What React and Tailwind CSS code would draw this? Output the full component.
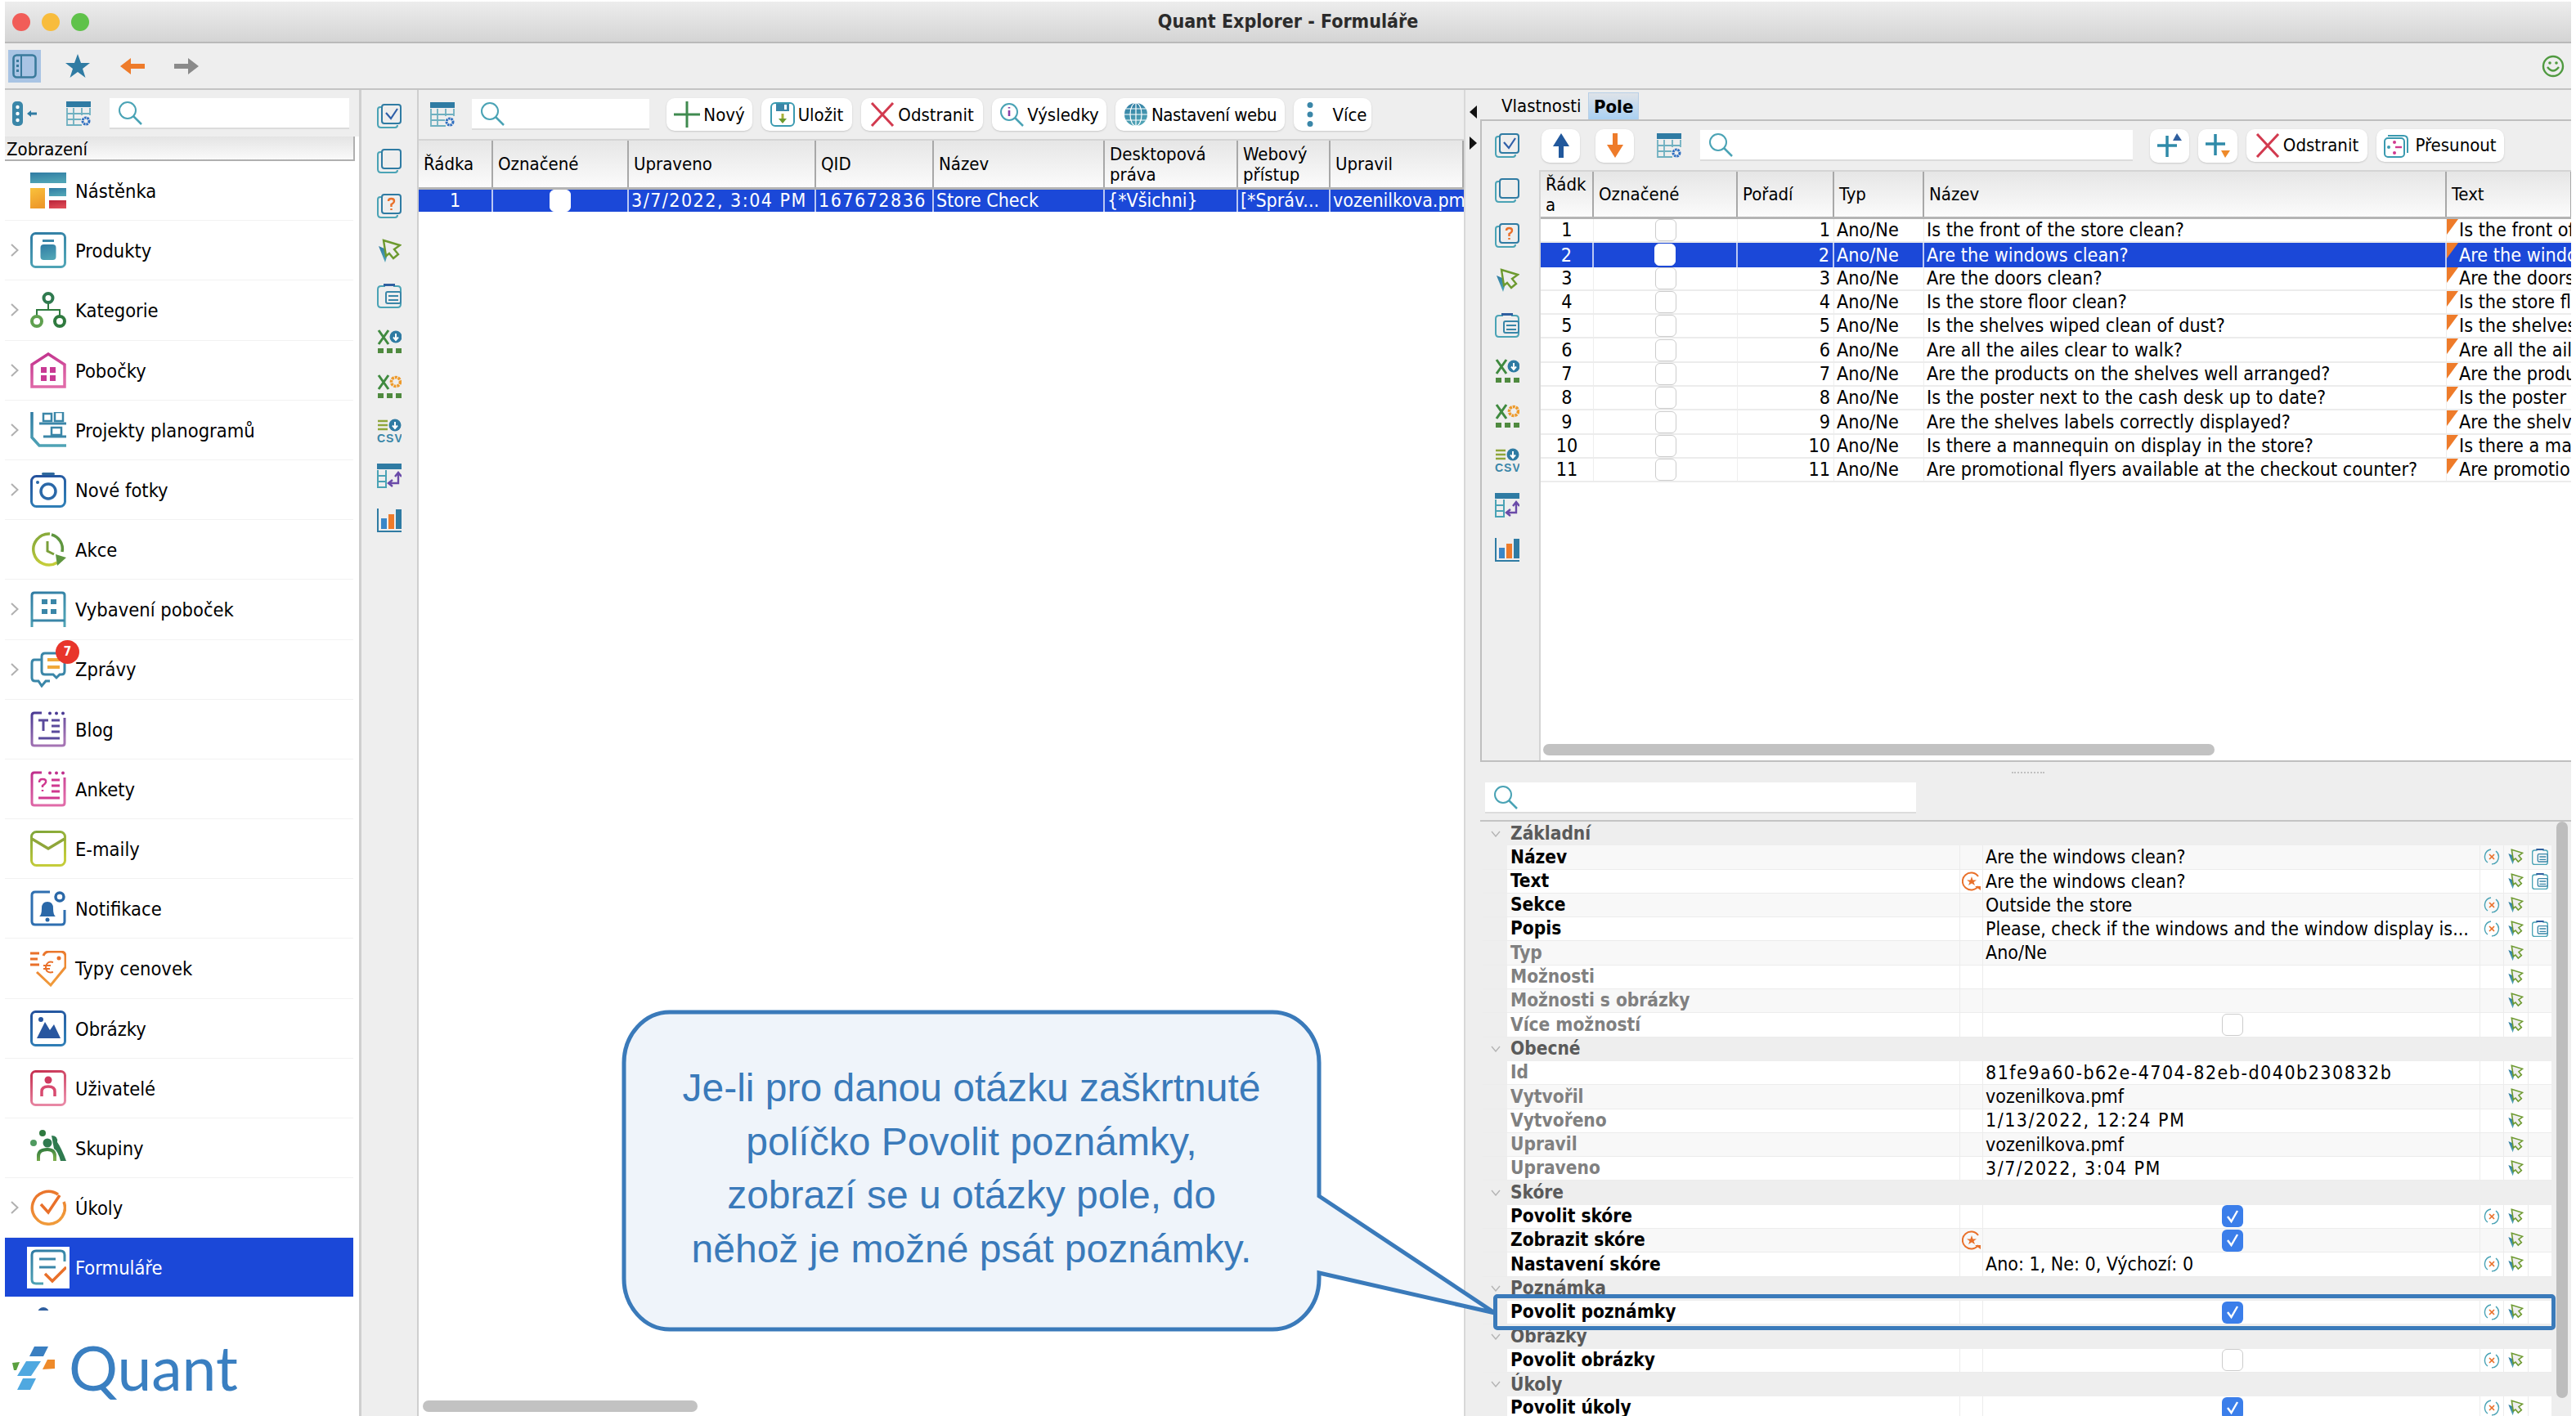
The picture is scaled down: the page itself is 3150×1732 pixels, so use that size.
import React from 'react';

const TEAL = '#3a86a8';
const BLUE = '#2f6fb0';
const SEL = 'bg-[#1b48d8] text-white';

function Gradients() {
  const defs = {
    teal: ['#2f7ba3', '#4fa3b5'],
    orange: ['#f9c23c', '#ee9a2a'],
    red: ['#b9243a', '#dd4a55'],
    pink: ['#c02f8c', '#e06aa8'],
    green: ['#2f7a3f', '#7aac4a'],
    lime: ['#7fa53a', '#c4cc3a'],
    blue: ['#24509c', '#2f7db5'],
    purple: ['#4a3a94', '#a574b4'],
    rose: ['#c62f4f', '#e887a4'],
    tag: ['#e9702a', '#f09a3a'],
  };
  return (
    <svg className="absolute h-0 w-0">
      <defs>
        {Object.entries(defs).map(([k, [a, b]]) => (
          <linearGradient key={k} id={`g-${k}`} x1="0" y1="0" x2="0.3" y2="1">
            <stop offset="0" stopColor={a} />
            <stop offset="1" stopColor={b} />
          </linearGradient>
        ))}
      </defs>
    </svg>
  );
}

const Svg = ({ s = 44, v = 44, children }) => (
  <svg width={s} height={s} viewBox={`0 0 ${v} ${v}`} fill="none" className="shrink-0">{children}</svg>
);

// sidebar icons
const sideIcons = {
  dash: (
    <Svg>
      <rect x="0" y="0" width="44" height="13" fill="url(#g-teal)" />
      <rect x="0" y="19" width="18" height="25" fill="url(#g-orange)" />
      <rect x="23" y="19" width="21" height="10" fill="url(#g-teal)" />
      <rect x="23" y="34" width="21" height="10" fill="url(#g-red)" />
    </Svg>
  ),
  product: (
    <Svg>
      <rect x="1.5" y="1.5" width="41" height="41" rx="5" stroke="url(#g-teal)" strokeWidth="3" />
      <rect x="15" y="9" width="14" height="3" fill={TEAL} />
      <rect x="12.5" y="15" width="19" height="19" rx="4" fill="url(#g-teal)" />
    </Svg>
  ),
  category: (
    <Svg>
      <path d="M22 13V22M8 29V22H36V29" stroke="#2f7a3f" strokeWidth="2" />
      <circle cx="22" cy="7.5" r="5.5" stroke="#2f7a4f" strokeWidth="4" />
      <circle cx="8" cy="36" r="6" stroke="#5fa04f" strokeWidth="4" />
      <circle cx="36" cy="36" r="6" stroke="#2f7a3f" strokeWidth="4" />
    </Svg>
  ),
  branch: (
    <Svg>
      <path d="M2 42V15L22 2L42 15V42Z" stroke="url(#g-pink)" strokeWidth="3.5" />
      <path d="M13 18h7v7h-7zM24 18h7v7h-7zM13 28h7v7h-7zM24 28h7v7h-7z" fill="#c93a94" />
    </Svg>
  ),
  plano: (
    <Svg>
      <path d="M2 0V31L11 41H44" stroke="url(#g-teal)" strokeWidth="3.5" />
      <path d="M11 14H44" stroke={TEAL} strokeWidth="3" />
      <path d="M16 30H44" stroke={TEAL} strokeWidth="3" />
      <path d="M16 2h10v9H16zM30 0h10v11H30zM26 19h12v9H26z" stroke={TEAL} strokeWidth="2.5" />
    </Svg>
  ),
  photo: (
    <Svg>
      <rect x="1.5" y="5.5" width="41" height="37" rx="6" stroke="url(#g-blue)" strokeWidth="3" />
      <rect x="14" y="1" width="16" height="3" rx="1.5" fill="#2f6a9c" />
      <circle cx="22" cy="24" r="9" stroke="#2a68a8" strokeWidth="3.5" />
      <circle cx="9" cy="13" r="2" fill="#2a68a8" />
    </Svg>
  ),
  action: (
    <Svg>
      <path d="M24 3A19 19 0 1 0 33 38" stroke="url(#g-lime)" strokeWidth="3.5" />
      <path d="M26 4A18 18 0 0 1 39 25" stroke="#5f963f" strokeWidth="3.5" />
      <path d="M21 12V24L29 28" stroke="#7a9f3a" strokeWidth="3" />
      <path d="M31 28L44 32L33 42Z" fill="#5f963f" />
    </Svg>
  ),
  equip: (
    <Svg>
      <path d="M2 44V5Q2 2 5 2H39Q42 2 42 5V44" stroke="url(#g-teal)" strokeWidth="3" />
      <path d="M2 36H42" stroke={TEAL} strokeWidth="3" />
      <path d="M14 10h7v6h-7zM25 10h7v6h-7zM14 22h7v6h-7zM25 22h7v6h-7z" fill={TEAL} />
    </Svg>
  ),
  msg: (
    <Svg>
      <path d="M14 10H5Q2 10 2 14V32Q2 36 6 36H10L14 42L19 36H24" stroke={TEAL} strokeWidth="3" />
      <path d="M18 2H38Q42 2 42 6V24Q42 28 38 28H36L32 32L28 28H18Q14 28 14 24V6Q14 2 18 2Z" fill="#fff" stroke={TEAL} strokeWidth="3" />
      <path d="M21 10H36M21 19H36" stroke="#f0a93a" strokeWidth="4" />
    </Svg>
  ),
  blog: (
    <Svg>
      <path d="M14 2H5Q2 2 2 5V39Q2 42 5 42H39Q42 42 42 39V8" stroke="url(#g-purple)" strokeWidth="3" />
      <circle cx="24" cy="2.5" r="2" fill="#4a3a94" /><circle cx="32" cy="2.5" r="2" fill="#4a3a94" /><circle cx="40" cy="2.5" r="2" fill="#4a3a94" />
      <path d="M10 11H22M16 11V24" stroke="#5a4a9c" strokeWidth="3" />
      <path d="M26 11H36M26 18H36M26 25H36M10 33H36" stroke="#5a4a9c" strokeWidth="3" />
    </Svg>
  ),
  poll: (
    <Svg>
      <path d="M14 2H5Q2 2 2 5V39Q2 42 5 42H39Q42 42 42 39V8" stroke="url(#g-pink)" strokeWidth="3" />
      <circle cx="24" cy="2.5" r="2" fill="#c02f8c" /><circle cx="32" cy="2.5" r="2" fill="#c02f8c" /><circle cx="40" cy="2.5" r="2" fill="#c02f8c" />
      <path d="M11 14Q11 10 15 10Q20 10 19 14Q18 16 15 18V20M15 23V25" stroke="#d0388f" strokeWidth="2.5" />
      <path d="M26 11H36M26 18H36M26 25H36M10 33H36" stroke="#d0388f" strokeWidth="3" />
    </Svg>
  ),
  mail: (
    <Svg>
      <rect x="1.5" y="1.5" width="41" height="41" rx="6" stroke="url(#g-lime)" strokeWidth="3" />
      <path d="M2 10L22 22L42 10" stroke="#8fa63a" strokeWidth="3.5" />
    </Svg>
  ),
  notif: (
    <Svg>
      <path d="M24 2H6Q2 2 2 6V38Q2 42 6 42H38Q42 42 42 38V24" stroke={BLUE} strokeWidth="3" />
      <path d="M11 32Q14 30 14 22Q14 14 21 14Q28 14 28 22Q28 30 31 32Z" fill="#2a68a8" />
      <circle cx="21" cy="36" r="2.5" fill="#2a68a8" />
      <circle cx="36" cy="8" r="5" stroke="#2a68a8" strokeWidth="3.5" />
    </Svg>
  ),
  price: (
    <Svg>
      <path d="M0 3H11M0 10H9M0 17H11" stroke="#e9702a" strokeWidth="3" />
      <path d="M16 6Q18 1 23 1H37Q43 1 43 7V20L25 42L8 26" stroke="url(#g-tag)" strokeWidth="3" />
      <circle cx="35" cy="9" r="2.5" fill="#e9702a" />
      <path d="M28 14Q20 12 19 20Q19 28 28 26M16 18H25M16 22H24" stroke="#e9702a" strokeWidth="2" />
    </Svg>
  ),
  image: (
    <Svg>
      <rect x="1.5" y="1.5" width="41" height="41" rx="5" stroke="url(#g-blue)" strokeWidth="3" />
      <path d="M8 34L18 14L24 24L29 17L37 34Z" fill="#28569f" />
      <circle cx="13" cy="11" r="3" fill="#28569f" />
    </Svg>
  ),
  user: (
    <Svg>
      <rect x="1.5" y="1.5" width="41" height="41" rx="5" stroke="url(#g-rose)" strokeWidth="3" />
      <circle cx="22" cy="12" r="4.5" fill="#cf3a5f" />
      <path d="M14 32V26Q14 20 22 20Q30 20 30 26V32" stroke="#d84a6f" strokeWidth="3.5" />
    </Svg>
  ),
  group: (
    <Svg>
      <circle cx="15" cy="4" r="4" fill="#2f7a3f" />
      <circle cx="4" cy="16" r="4" fill="#4f9a5f" />
      <circle cx="21" cy="16" r="5.5" fill="#2f7a4f" />
      <path d="M26 7Q34 7 33 15Q38 22 44 38H37Q34 26 29 23" fill="#2f7a4f" />
      <path d="M10 38V32Q10 24 21 24Q30 24 30 32V38" stroke="url(#g-green)" strokeWidth="4" />
    </Svg>
  ),
  task: (
    <Svg>
      <path d="M34 6A20 20 0 1 0 41 15" stroke="url(#g-tag)" strokeWidth="3.5" />
      <path d="M13 18L22 28L36 7" stroke="#e9702a" strokeWidth="3.5" />
    </Svg>
  ),
  form: (
    <Svg>
      <path d="M42 15V7Q42 2 37 2H7Q2 2 2 7V37Q2 42 7 42H16" stroke="url(#g-teal)" strokeWidth="3" />
      <path d="M11 12H31M11 22H31" stroke={TEAL} strokeWidth="3" />
      <path d="M18 30L27 39L44 22" stroke="#e9702a" strokeWidth="3.5" />
    </Svg>
  ),
};

const navItems = [
  ['Nástěnka', 'dash', false],
  ['Produkty', 'product', true],
  ['Kategorie', 'category', true],
  ['Pobočky', 'branch', true],
  ['Projekty planogramů', 'plano', true],
  ['Nové fotky', 'photo', true],
  ['Akce', 'action', false],
  ['Vybavení poboček', 'equip', true],
  ['Zprávy', 'msg', true],
  ['Blog', 'blog', false],
  ['Ankety', 'poll', false],
  ['E-maily', 'mail', false],
  ['Notifikace', 'notif', false],
  ['Typy cenovek', 'price', false],
  ['Obrázky', 'image', false],
  ['Uživatelé', 'user', false],
  ['Skupiny', 'group', false],
  ['Úkoly', 'task', true],
];

// strip and toolbar icons, 30 units
const CopyFrame = ({ children }) => (
  <Svg s={30} v={30}>
    <path d="M5 4H4Q1 4 1 7V25Q1 29 5 29H22Q25 29 25 26" stroke="#4aa3b5" strokeWidth="2" />
    <rect x="6" y="1" width="23" height="23" rx="3" fill="#eee" stroke="#2f7ba3" strokeWidth="2" />
    {children}
  </Svg>
);

const CursorIcon = ({ s = 30 }) => (
  <Svg s={s} v={30}>
    <path d="M2 9L18 16L13 19L10 29Z" fill="url(#g-teal)" />
    <path d="M8 2L28 8L21 13L26 19L20 24L15 18L11 21Z" fill="#eee" stroke="#6d9a2f" strokeWidth="2.4" />
  </Svg>
);

const DocIcon = ({ s = 30 }) => (
  <Svg s={s} v={30}>
    <path d="M10 3H5Q1 3 1 7V25Q1 29 5 29H25Q29 29 29 25V7Q29 3 25 3H20" stroke="#4aa3b5" strokeWidth="2" />
    <rect x="8" y="0" width="14" height="3" fill="#2f5f9f" />
    <rect x="11" y="10" width="18" height="14" rx="2" stroke="#3a86a8" strokeWidth="2" />
    <path d="M14 15H26M14 20H26" stroke="#3a86a8" strokeWidth="2" />
  </Svg>
);

const Squares = () => (
  <path d="M1 24h7v6H1zM12 24h7v6h-7zM23 24h7v6h-7z" fill="#4f8a3f" />
);

const stripIcons = [
  <CopyFrame key="0"><path d="M11 11L17 18L25 6" stroke="#2f5fa8" strokeWidth="2.2" /></CopyFrame>,
  <CopyFrame key="1" />,
  <CopyFrame key="2">
    <path d="M14 9Q14 6 17.500 6Q21 6 21 9Q21 11 17.500 13V16M17.500 18V20" stroke="#e9702a" strokeWidth="2.4" />
  </CopyFrame>,
  <CursorIcon key="3" />,
  <DocIcon key="4" />,
  <Svg key="5" s={30} v={30}>
    <path d="M2 2L14 19M14 2L2 19" stroke="#3f8a3f" strokeWidth="3" />
    <circle cx="23" cy="10" r="7.5" fill="#2f7ba3" />
    <path d="M23 6V13M20 10.5L23 14L26 10.5" stroke="#fff" strokeWidth="2" />
    <Squares />
  </Svg>,
  <Svg key="6" s={30} v={30}>
    <path d="M2 2L14 19M14 2L2 19" stroke="#3f8a3f" strokeWidth="3" />
    <circle cx="23" cy="10" r="5.5" stroke="#ee9a2a" strokeWidth="3.6" strokeDasharray="3 1" />
    <Squares />
  </Svg>,
  <Svg key="7" s={30} v={30}>
    <path d="M1 3H13M1 8H13M1 13H13" stroke="#8fa63a" strokeWidth="2.6" />
    <circle cx="22" cy="8" r="7.5" fill="#2f7ba3" />
    <path d="M22 4V11M19 8.5L22 12L25 8.5" stroke="#fff" strokeWidth="2" />
    <text x="0" y="29" fontSize="14" fontWeight="700" letterSpacing="1" fill="#3a86a8" fontFamily="Liberation Sans, sans-serif">CSV</text>
  </Svg>,
  <Svg key="8" s={30} v={30}>
    <rect x="0" y="0" width="30" height="7" fill="#2f7ba3" />
    <path d="M1 8V29H11V8M1 15H11M1 22H11" stroke="#4aa3b5" strokeWidth="2" />
    <path d="M15 24H26V13M22 16L26 11L30 16M19 20L14 24L19 28" stroke="#6a4aa8" strokeWidth="2.4" />
  </Svg>,
  <Svg key="9" s={30} v={30}>
    <path d="M1 0V28H30" stroke="#2f7ba3" strokeWidth="2" />
    <rect x="5" y="12" width="7" height="13" fill="#3a86c8" />
    <rect x="14" y="7" width="7" height="18" fill="#ee7b2a" />
    <rect x="23" y="1" width="7" height="24" fill="#2f7ba3" />
  </Svg>,
];

const SearchIcon = () => (
  <Svg s={30} v={30}>
    <circle cx="12" cy="12" r="10" stroke="#4aa3b5" strokeWidth="2" />
    <path d="M19 19L29 29" stroke="#4aa3b5" strokeWidth="2.5" />
  </Svg>
);

const GridIcon = () => (
  <Svg s={30} v={30}>
    <rect x="0" y="0" width="30" height="7" fill="#2f7ba3" />
    <path d="M1 8V29H19M29 8V17M1 15H29M1 22H18M9 8V29M19 8V17" stroke="#6fb0c0" strokeWidth="1.8" />
    <circle cx="24" cy="24" r="4" stroke="#2f6fc0" strokeWidth="3" strokeDasharray="2.5 0.8" />
  </Svg>
);

const SearchBox = ({ w }) => (
  <div className={`flex h-[38px] items-center bg-white border-b-2 border-[#dcdcdc] pl-[10px] ${w}`}>
    <SearchIcon />
  </div>
);

const PlusIcon = () => (
  <Svg s={32} v={32}>
    <path d="M0 16H32" stroke="#3f8a4f" strokeWidth="3" />
    <path d="M16 0V32" stroke="#3f8a4f" strokeWidth="3" />
  </Svg>
);

const XIcon = () => (
  <Svg s={30} v={30}>
    <path d="M2 1L28 29M28 1L2 29" stroke="#d23a4f" strokeWidth="3" />
  </Svg>
);

const SaveIcon = () => (
  <Svg s={30} v={30}>
    <rect x="1" y="1" width="28" height="28" rx="5" stroke="#3a9ab0" strokeWidth="2" />
    <path d="M7 2H23V11H7Z" fill="#3a86a8" />
    <rect x="17" y="3" width="3" height="6" fill="#fff" />
    <path d="M15 14V23" stroke="#a8b03a" strokeWidth="3" />
    <path d="M10 20L15 26L20 20Z" fill="#6d9a2f" />
  </Svg>
);

const ResultIcon = () => (
  <Svg s={30} v={30}>
    <circle cx="12" cy="12" r="10" stroke="#4aa3b5" strokeWidth="2" />
    <path d="M19 19L29 29" stroke="#4aa3b5" strokeWidth="2.5" />
    <path d="M12 6V7.5M12 10V17" stroke="#8a3fa8" strokeWidth="2.6" />
  </Svg>
);

const GlobeIcon = () => (
  <Svg s={30} v={30}>
    <circle cx="15" cy="15" r="14" fill="url(#g-teal)" />
    <path d="M15 1V29M1 15H29M3 8H27M3 22H27" stroke="#fff" strokeWidth="1.2" />
    <ellipse cx="15" cy="15" rx="7" ry="14" stroke="#fff" strokeWidth="1.2" />
  </Svg>
);

const DotsIcon = () => (
  <Svg s={30} v={30}>
    <circle cx="15" cy="3.5" r="3.5" fill="#3a86a8" />
    <circle cx="15" cy="15" r="3.5" fill="#3a86a8" />
    <circle cx="15" cy="26.5" r="3.5" fill="#3a86a8" />
  </Svg>
);

const MoveIcon = () => (
  <Svg s={30} v={30}>
    <path d="M5 3H24Q29 3 29 8V24" stroke="#3a9ab0" strokeWidth="2" />
    <rect x="1" y="6" width="24" height="23" rx="4" stroke="#3a9ab0" strokeWidth="2" fill="#fff" />
    <circle cx="13" cy="11" r="2" fill="#d0388f" /><circle cx="13" cy="24" r="2" fill="#d0388f" />
    <circle cx="6" cy="17" r="2" fill="#3a9ab0" />
    <path d="M14 17H22" stroke="#d0388f" strokeWidth="2.4" />
  </Svg>
);

const Btn = ({ icon, label, w, gap = 'gap-[4px]', cls = '' }) => (
  <div className={`flex h-[40px] shrink-0 items-center justify-center rounded-[10px] bg-white text-[22px] text-black shadow-[0_1px_2px_#c8c8c8] ${gap} ${w} ${cls}`}>
    {icon}
    {label && <span>{label}</span>}
  </div>
);

const Check = ({ on = false, sel = false }) =>
  on ? (
    <div className="flex h-[27px] w-[26px] items-center justify-center rounded-[6px] bg-[#3b7eea]">
      <svg width="18" height="18" viewBox="0 0 18 18" fill="none">
        <path d="M3 9L7.5 15L15 2" stroke="#fff" strokeWidth="2.4" />
      </svg>
    </div>
  ) : (
    <div className={`h-[27px] w-[26px] rounded-[6px] border bg-white ${sel ? 'border-white' : 'border-[#cccccc]'}`} />
  );

const leftCols = [
  { w: 'w-[91px]', h: 'Řádka' },
  { w: 'w-[166px]', h: 'Označené' },
  { w: 'w-[229px]', h: 'Upraveno' },
  { w: 'w-[144px]', h: 'QID' },
  { w: 'w-[209px]', h: 'Název' },
  { w: 'w-[163px]', h: <>Desktopová<br />práva</> },
  { w: 'w-[113px]', h: <>Webový<br />přístup</> },
  { w: 'w-[163px]', h: 'Upravil' },
];

const rightCols = [
  { w: 'w-[65px]', h: <>Řádk<br />a</> },
  { w: 'w-[176px]', h: 'Označené' },
  { w: 'w-[118px]', h: 'Pořadí' },
  { w: 'w-[110px]', h: 'Typ' },
  { w: 'w-[639px]', h: 'Název' },
  { w: 'w-[153px]', h: 'Text' },
];

const HeaderRow = ({ cols, h }) => (
  <div className={`flex shrink-0 border-b-[3px] border-[#b4b4b4] bg-gradient-to-b from-[#e6e6e6] to-[#fbfbfb] text-[22px] leading-[25px] text-black ${h}`}>
    {cols.map((c, i) => (
      <div key={i} className={`flex shrink-0 items-center border-r-2 border-[#a8a8a8] pl-[6px] ${c.w}`}>
        <span>{c.h}</span>
      </div>
    ))}
  </div>
);

const questions = [
  'Is the front of the store clean?',
  'Are the windows clean?',
  'Are the doors clean?',
  'Is the store floor clean?',
  'Is the shelves wiped clean of dust?',
  'Are all the ailes clear to walk?',
  'Are the products on the shelves well arranged?',
  'Is the poster next to the cash desk up to date?',
  'Are the shelves labels correctly displayed?',
  'Is there a mannequin on display in the store?',
  'Are promotional flyers available at the checkout counter?',
];

const StarRefresh = () => (
  <Svg s={24} v={24}>
    <path d="M20 6A10.5 10.5 0 1 0 20 18" stroke="#e9702a" strokeWidth="2" />
    <path d="M16 18H23V23Z" fill="#e9702a" />
    <path d="M12 6L13.5 10.5H18L14.5 13L16 17L12 14.5L8 17L9.5 13L6 10.5H10.5Z" fill="#e9702a" />
  </Svg>
);

const ResetIcon = () => (
  <Svg s={20} v={20}>
    <path d="M9 1A9 9 0 0 0 5 17" stroke="#4aa3b5" strokeWidth="1.4" />
    <path d="M10 19A9 9 0 0 0 15 3" stroke="#4aa3b5" strokeWidth="1.4" />
    <path d="M7 7L13 13M13 7L7 13" stroke="#e9702a" strokeWidth="1.6" />
  </Svg>
);

const propRows = [
  { g: 'Základní' },
  { n: 'Název', v: 'Are the windows clean?', i: [1, 1, 1] },
  { n: 'Text', v: 'Are the windows clean?', star: true, i: [0, 1, 1] },
  { n: 'Sekce', v: 'Outside the store', i: [1, 1, 0] },
  { n: 'Popis', v: 'Please, check if the windows and the window display is...', i: [1, 1, 1] },
  { n: 'Typ', v: 'Ano/Ne', dim: true, i: [0, 1, 0] },
  { n: 'Možnosti', v: '', dim: true, i: [0, 1, 0] },
  { n: 'Možnosti s obrázky', v: '', dim: true, i: [0, 1, 0] },
  { n: 'Více možností', c: 'off', dim: true, i: [0, 1, 0] },
  { g: 'Obecné' },
  { n: 'Id', v: '81fe9a60-b62e-4704-82eb-d040b230832b', num: true, dim: true, i: [0, 1, 0] },
  { n: 'Vytvořil', v: 'vozenilkova.pmf', dim: true, i: [0, 1, 0] },
  { n: 'Vytvořeno', v: '1/13/2022, 12:24 PM', num: true, dim: true, i: [0, 1, 0] },
  { n: 'Upravil', v: 'vozenilkova.pmf', dim: true, i: [0, 1, 0] },
  { n: 'Upraveno', v: '3/7/2022, 3:04 PM', num: true, dim: true, i: [0, 1, 0] },
  { g: 'Skóre' },
  { n: 'Povolit skóre', c: 'on', i: [1, 1, 0] },
  { n: 'Zobrazit skóre', c: 'on', star: true, i: [0, 1, 0] },
  { n: 'Nastavení skóre', v: 'Ano: 1, Ne: 0, Výchozí: 0', i: [1, 1, 0] },
  { g: 'Poznámka' },
  { n: 'Povolit poznámky', c: 'on', i: [1, 1, 0] },
  { g: 'Obrázky' },
  { n: 'Povolit obrázky', c: 'off', i: [1, 1, 0] },
  { g: 'Úkoly' },
  { n: 'Povolit úkoly', c: 'on', i: [1, 1, 0] },
];

function PropRow({ row, odd }) {
  if (row.g) {
    return (
      <div className="flex h-[29.3px] shrink-0 items-center bg-[#eeeeee]">
        <div className="flex w-[30px] justify-center pl-[2px]">
          <svg width="12" height="8" viewBox="0 0 12 8" fill="none"><path d="M1 1L6 7L11 1" stroke="#b4b4b4" strokeWidth="1.4" /></svg>
        </div>
        <span className="pl-[4px] text-[22.500px] font-bold text-[#5a5a5a]">{row.g}</span>
      </div>
    );
  }
  return (
    <div className={`flex h-[29.3px] shrink-0 border-b border-[#ececec] ${odd ? 'bg-[#f8f8f8]' : 'bg-white'}`}>
      <div className="w-[30px] shrink-0 bg-[#eeeeee]" />
      <div className={`flex w-[553px] shrink-0 items-center pl-[4px] text-[22.500px] font-bold ${row.dim ? 'text-[#808080]' : 'text-black'}`}>
        {row.n}
      </div>
      <div className="flex w-[29px] shrink-0 items-center justify-center border-x border-[#ececec]">
        {row.star && <StarRefresh />}
      </div>
      <div className={`flex w-[607px] shrink-0 items-center pl-[3px] text-[23px] whitespace-nowrap text-black ${row.num ? 'tracking-[1.5px]' : ''}`}>
        {row.c ? <div className="flex w-full justify-center"><Check on={row.c === 'on'} /></div> : row.v}
      </div>
      {row.i.map((on, k) => (
        <div key={k} className="flex w-[29.3px] shrink-0 items-center justify-center border-l border-[#ececec]">
          {on ? (k === 0 ? <ResetIcon /> : k === 1 ? <CursorIcon s={20} /> : <DocIcon s={20} />) : null}
        </div>
      ))}
    </div>
  );
}

const ArrowUp = () => (
  <svg width="20" height="30" viewBox="0 0 20 30"><path d="M10 0L20 16H13V30H7V16H0Z" fill="#21589c" /></svg>
);
const ArrowDown = () => (
  <svg width="20" height="30" viewBox="0 0 20 30"><path d="M7 0H13V14H20L10 30L0 14H7Z" fill="#ee7b2a" /></svg>
);

export default function App() {
  return (
    <div className="relative flex h-[1732px] w-[3150px] flex-col overflow-hidden bg-white pt-[2px] pr-[6px] pl-[6px] font-['DejaVu_Sans',sans-serif] font-stretch-condensed">
      <Gradients />

      {/* title */}
      <div className="grid h-[51px] shrink-0 grid-cols-[1fr_auto_1fr] items-center border-b-2 border-[#b9b9b9] bg-gradient-to-b from-[#ededed] to-[#d4d4d4]">
        <div className="flex gap-[14px] pl-[9px]">
          <div className="h-[22px] w-[22px] rounded-full bg-[#f15d58]" />
          <div className="h-[22px] w-[22px] rounded-full bg-[#f8bc3c]" />
          <div className="h-[22px] w-[22px] rounded-full bg-[#5fc24a]" />
        </div>
        <div className="text-[23px] font-bold text-[#2b2b2b]">Quant Explorer - Formuláře</div>
        <div />
      </div>

      {/* toolbar */}
      <div className="flex h-[55px] shrink-0 items-center bg-[#eeeeee] pr-[8px] pl-[4px]">
        <div className="flex h-[40px] w-[40px] items-center justify-center bg-[#a9c4e4]">
          <svg width="30" height="30" viewBox="0 0 30 30" fill="none">
            <rect x="1.5" y="1.5" width="27" height="27" rx="4" stroke="#3a7a9c" strokeWidth="2.6" />
            <path d="M11 2V28" stroke="#3a7a9c" strokeWidth="2" />
            <rect x="5" y="7" width="3" height="3" fill="#3a7a9c" /><rect x="5" y="13" width="3" height="3" fill="#3a7a9c" /><rect x="5" y="19" width="3" height="3" fill="#3a7a9c" />
          </svg>
        </div>
        <svg className="ml-[30px]" width="30" height="30" viewBox="0 0 30 30"><path d="M15 0L19 11H30L21 18L24.500 29L15 22L5.500 29L9 18L0 11H11Z" fill="#2f7ba3" /></svg>
        <svg className="ml-[37px]" width="30" height="20" viewBox="0 0 30 20"><path d="M0 10L13 0V7H30V13H13V20Z" fill="#ee7b2a" /></svg>
        <svg className="ml-[36px]" width="30" height="20" viewBox="0 0 30 20"><path d="M30 10L17 0V7H0V13H17V20Z" fill="#8a8a8a" /></svg>
        <svg className="ml-auto" width="28" height="28" viewBox="0 0 28 28" fill="none">
          <circle cx="14" cy="14" r="12" stroke="#4f9a3f" strokeWidth="2.4" />
          <path d="M7 15Q14 24 21 15" stroke="#4f9a3f" strokeWidth="2.4" />
          <circle cx="10" cy="10" r="1.8" fill="#4f9a3f" /><circle cx="18" cy="10" r="1.8" fill="#4f9a3f" />
        </svg>
      </div>

      <div className="flex min-h-0 flex-1 border-t-2 border-[#c4c4c4]">
        {/* sidebar */}
        <div className="flex h-full w-[436px] shrink-0 flex-col border-r-[3px] border-[#cfcfcf] bg-white">
          <div className="flex h-[57px] shrink-0 items-center bg-[#eeeeee] pl-[9px]">
            <svg width="30" height="30" viewBox="0 0 30 30" fill="none">
              <rect x="0" y="0" width="13" height="30" rx="5" fill="#3a86a8" />
              <circle cx="6.500" cy="7" r="2.200" fill="#fff" /><circle cx="6.500" cy="15" r="2.200" fill="#fff" /><circle cx="6.500" cy="23" r="2.200" fill="#fff" />
              <path d="M18 15L23 11V13.500H30V16.500H23V19Z" fill="#2f7ba3" />
            </svg>
            <div className="ml-[36px]"><GridIcon /></div>
            <div className="ml-[23px]"><SearchBox w="w-[293px]" /></div>
          </div>
          <div className="flex h-[30px] w-[428px] shrink-0 items-center border-r-2 border-b-2 border-[#b0b0b0] bg-gradient-to-b from-[#e4e4e4] to-[#fafafa] pt-[2px] pl-[2px] text-[22px] text-black">
            Zobrazení
          </div>
          <div className="h-[1406px] w-[426px] shrink-0 overflow-hidden text-[23.500px] text-black">
            {navItems.map(([label, icon, chev]) => (
              <div key={label} className="flex h-[73.2px] items-center border-b border-[#f2f2f2]">
                <div className="flex w-[31px] shrink-0 pl-[7px]">
                  {chev && (
                    <svg width="10" height="16" viewBox="0 0 10 16" fill="none"><path d="M1 1L8.500 8L1 15" stroke="#b0b0b0" strokeWidth="2" /></svg>
                  )}
                </div>
                <div className="relative">
                  {sideIcons[icon]}
                  {label === 'Zprávy' && (
                    <div className="absolute top-[-14px] left-[31px] flex h-[29px] w-[29px] items-center justify-center rounded-full bg-[#e8352b] text-[15px] font-bold text-white">7</div>
                  )}
                </div>
                <span className="ml-[11px] pt-[3px]">{label}</span>
              </div>
            ))}
            <div className={`flex h-[72px] items-center ${SEL}`}>
              <div className="ml-[27px] flex h-[51px] w-[52px] shrink-0 items-center justify-center bg-white">
                {sideIcons.form}
              </div>
              <span className="ml-[7px] pt-[3px]">Formuláře</span>
            </div>
            <div className="pt-[13px] pl-[31px]">
              <div className="ml-[9px] h-[8px] w-[14px] rounded-t-full bg-[#2f5f9f]" />
            </div>
          </div>
          <div className="flex flex-1 items-start pt-[40px] pl-[9px]">
            <svg width="52" height="54" viewBox="0 0 52 54" className="mt-[3px] shrink-0">
              <path d="M27 1H44L38 13H21Z" fill="#3a7fc1" />
              <path d="M17 19H35L23 37H6Z M13 40H29L22 54H6Z" fill="#4fa8e0" />
              <path d="M9 20L0 21L2 30L5 30Z" fill="#5aa03f" />
              <path d="M43 17H52V28L37 29Z" fill="#ee8a2a" />
            </svg>
            <div className="ml-[17px] font-['Lato',sans-serif] text-[75px] leading-[58px] font-normal text-[#3a7fc1] font-stretch-normal">Quant</div>
          </div>
        </div>

        {/* forms list */}
        <div className="flex h-full w-[68px] shrink-0 flex-col items-center gap-[25px] bg-[#eeeeee] pt-[17px]">
          {stripIcons.map((ic, i) => <div key={i}>{ic}</div>)}
        </div>
        <div className="flex h-full w-[1280px] shrink-0 flex-col border-l-2 border-[#cfcfcf] bg-[#eeeeee]">
          <div className="flex h-[60px] shrink-0 items-center pl-[14px]">
            <GridIcon />
            <div className="ml-[21px]"><SearchBox w="w-[217px]" /></div>
            <div className="ml-[21px] flex gap-[11px]">
              <Btn w="w-[105px]" icon={<PlusIcon />} label="Nový" />
              <Btn w="w-[111px]" icon={<SaveIcon />} label="Uložit" />
              <Btn w="w-[149px]" icon={<XIcon />} label="Odstranit" />
              <Btn w="w-[140px]" icon={<ResultIcon />} label="Výsledky" />
              <Btn w="w-[207px]" cls="tracking-[-0.4px]" icon={<GlobeIcon />} label="Nastavení webu" />
              <Btn w="w-[95px]" gap="gap-[12px]" icon={<DotsIcon />} label="Více" />
            </div>
          </div>
          <div className="flex min-h-0 flex-1 flex-col border-t-2 border-[#d4d4d4] bg-white">
            <HeaderRow cols={leftCols} h="h-[60px]" />
            <div className={`flex h-[27px] shrink-0 items-center text-[23px] whitespace-nowrap ${SEL}`}>
              <div className="flex h-full w-[91px] shrink-0 items-center justify-center border-r-2 border-white/70">1</div>
              <div className="flex h-full w-[166px] shrink-0 items-center justify-center border-r-2 border-white/70"><Check sel /></div>
              <div className="flex h-full w-[229px] shrink-0 items-center border-r-2 border-white/70 pl-[3px] tracking-[1.5px]">3/7/2022, 3:04 PM</div>
              <div className="flex h-full w-[144px] shrink-0 items-center border-r-2 border-white/70 pl-[3px] tracking-[1.5px]">167672836</div>
              <div className="flex h-full w-[209px] shrink-0 items-center border-r-2 border-white/70 pl-[3px]">Store Check</div>
              <div className="flex h-full w-[163px] shrink-0 items-center border-r-2 border-white/70 pl-[3px]">{'{*Všichni}'}</div>
              <div className="flex h-full w-[113px] shrink-0 items-center border-r-2 border-white/70 pl-[3px]">[*Správ...</div>
              <div className="flex h-full w-[163px] shrink-0 items-center overflow-hidden pl-[3px]">vozenilkova.pmf</div>
            </div>
            <div className="flex-1" />
            <div className="mb-[5px] ml-[5px] h-[14px] w-[336px] shrink-0 rounded-full bg-[#c2c2c2]" />
          </div>
        </div>

        {/* splitter */}
        <div className="flex h-full w-[20px] shrink-0 flex-col items-center gap-[22px] border-l-2 border-[#d8d8d8] bg-[#eeeeee] pt-[19px]">
          <svg width="9" height="16" viewBox="0 0 9 16"><path d="M9 0V16L0 8Z" fill="#111" /></svg>
          <svg width="9" height="16" viewBox="0 0 9 16"><path d="M0 0V16L9 8Z" fill="#111" /></svg>
        </div>

        {/* fields panel */}
        <div className="flex h-full min-w-0 flex-1 flex-col bg-[#eeeeee]">
          <div className="flex h-[36px] shrink-0 items-end pl-[26px] text-[22px]">
            <div className="flex h-[33px] w-[106px] items-center text-black">Vlastnosti</div>
            <div className="flex h-[33px] items-center border-x border-t border-[#b8cfe6] bg-gradient-to-b from-[#dfe3e8] to-[#a9d0f2] px-[6px] font-bold text-black">Pole</div>
          </div>
          <div className="flex h-[786px] shrink-0 border-t-2 border-b-2 border-l-2 border-[#bfbfbf]">
            <div className="flex w-[70px] shrink-0 flex-col gap-[25px] pt-[15px] pl-[16px]">
              {stripIcons.map((ic, i) => <div key={i}>{ic}</div>)}
            </div>
            <div className="flex min-w-0 flex-1 flex-col">
              <div className="flex h-[60px] shrink-0 items-center pl-[3px]">
                <div className="flex h-[41px] w-[47px] items-center justify-center rounded-[10px] bg-white shadow-[0_1px_2px_#c8c8c8]"><ArrowUp /></div>
                <div className="ml-[19px] flex h-[41px] w-[47px] items-center justify-center rounded-[10px] bg-white shadow-[0_1px_2px_#c8c8c8]"><ArrowDown /></div>
                <div className="ml-[28px]"><GridIcon /></div>
                <div className="ml-[23px]"><SearchBox w="w-[529px]" /></div>
                <div className="ml-[21px] flex gap-[11px]">
                  <div className="flex h-[41px] w-[48px] items-center justify-center rounded-[10px] bg-white shadow-[0_1px_2px_#c8c8c8]">
                    <Svg s={32} v={32}>
                      <path d="M1 16H25" stroke="#2f8aa8" strokeWidth="3.5" /><path d="M13 4V30" stroke="#2f8aa8" strokeWidth="3.5" />
                      <path d="M20 10L25 1L31 10Z" fill="#2f5f9f" />
                    </Svg>
                  </div>
                  <div className="flex h-[41px] w-[48px] items-center justify-center rounded-[10px] bg-white shadow-[0_1px_2px_#c8c8c8]">
                    <Svg s={32} v={32}>
                      <path d="M1 14H25" stroke="#2f8aa8" strokeWidth="3.500" /><path d="M13 2V28" stroke="#2f8aa8" strokeWidth="3.5" />
                      <path d="M20 22L25 31L31 22Z" fill="#ee8a2a" />
                    </Svg>
                  </div>
                  <Btn w="w-[148px]" icon={<XIcon />} label="Odstranit" />
                  <Btn w="w-[156px]" gap="gap-[8px]" icon={<MoveIcon />} label="Přesunout" />
                </div>
              </div>
              <div className="flex min-h-0 flex-1 flex-col overflow-hidden border-t-2 border-l-2 border-[#d4d4d4] bg-white">
                <HeaderRow cols={rightCols} h="h-[58px]" />
                {questions.map((q, i) => {
                  const sel = i === 1;
                  const cell = `flex h-full shrink-0 items-center ${sel ? 'border-r-2 border-white/70' : 'border-r border-[#eeeeee]'}`;
                  return (
                    <div key={i} className={`flex h-[29.3px] shrink-0 items-center text-[23.200px] whitespace-nowrap ${sel ? SEL : 'border-b-2 border-[#ececec] text-black'}`}>
                      <div className={`${cell} w-[65px] justify-center`}>{i + 1}</div>
                      <div className={`${cell} w-[176px] justify-center`}><Check sel={sel} /></div>
                      <div className={`${cell} w-[118px] justify-end pr-[4px]`}>{i + 1}</div>
                      <div className={`${cell} w-[110px] pl-[3px]`}>Ano/Ne</div>
                      <div className={`${cell} w-[639px] pl-[3px]`}>{q}</div>
                      <div className="flex h-full w-[153px] shrink-0 overflow-hidden">
                        <svg width="14" height="19" viewBox="0 0 14 19" className="shrink-0"><path d="M0 0H14L0 19Z" fill="#ee7b2a" /></svg>
                        <span className={`ml-[1px] self-center ${sel ? 'text-white' : 'text-black'}`}>{q}</span>
                      </div>
                    </div>
                  );
                })}
                <div className="flex-1" />
                <div className="mb-[6px] ml-[3px] h-[14px] w-[821px] shrink-0 rounded-full bg-[#c2c2c2]" />
              </div>
            </div>
          </div>
          <div className="flex h-[71px] shrink-0 flex-col pl-[6px]">
            <div className="flex h-[25px] shrink-0 items-center justify-center">
              <div className="h-[2px] w-[40px] border-t-2 border-dotted border-[#c0c0c0]" />
            </div>
            <SearchBox w="w-[527px]" />
          </div>
          <div className="flex min-h-0 flex-1 border-t-2 border-[#c4c4c4] pl-[3px]">
            <div className="flex w-[1307px] shrink-0 flex-col overflow-hidden">
              {propRows.map((r, i) => <PropRow key={i} row={r} odd={i % 2 === 1} />)}
            </div>
            <div className="ml-[6px] h-[705px] w-[14px] shrink-0 rounded-full bg-[#bdbdbd]" />
          </div>
        </div>
      </div>

      {/* callout with tail pointing at the highlighted row */}
      <div className="absolute top-[1234px] left-[759px] h-[396px] w-[1075px]">
        <svg width="1075" height="396" viewBox="0 0 1075 396" className="absolute inset-0">
          <path
            d="M60 4H797A57 62 0 0 1 854 66V229L1069 372L854 323V330A57 62 0 0 1 797 392H60A56 62 0 0 1 4 330V66A56 62 0 0 1 60 4Z"
            fill="#eff4fa"
            stroke="#3a7aba"
            strokeWidth="5"
          />
        </svg>
        <div className="absolute top-[64px] left-[4px] w-[850px] text-center font-['Liberation_Sans',sans-serif] text-[48px] leading-[65.500px] text-[#3a7aba] font-stretch-normal">
          Je-li pro danou otázku zaškrtnuté<br />
          políčko Povolit poznámky,<br />
          zobrazí se u otázky pole, do<br />
          něhož je možné psát poznámky.
        </div>
      </div>
      <div className="absolute top-[1583px] left-[1826px] h-[44px] w-[1299px] rounded-[5px] border-[5px] border-[#3a7aba]" />
    </div>
  );
}
